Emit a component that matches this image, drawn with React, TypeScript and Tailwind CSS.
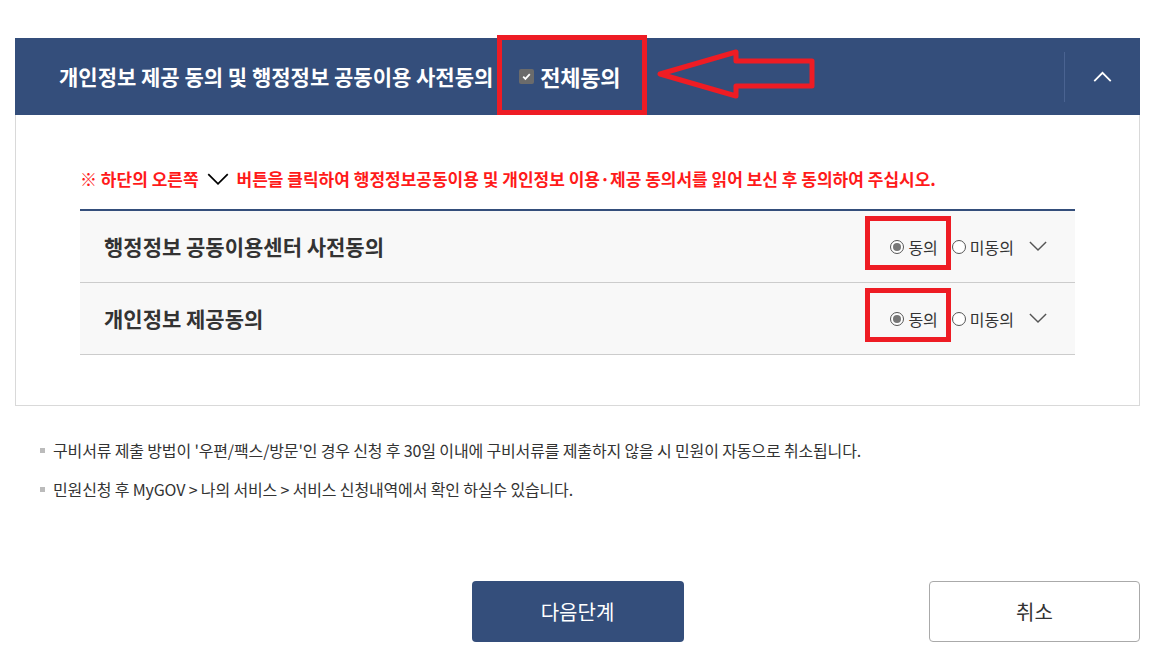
import { useState } from 'react'

const FONT = "font-['Noto_Sans_CJK_KR','Noto_Sans',sans-serif]"

function ChevronDown({ className }: { className?: string }) {
  return (
    <svg viewBox="0 0 20 12" className={className} fill="none">
      <path d="M1 1l9 9 9-9" stroke="currentColor" strokeWidth="1.6" />
    </svg>
  )
}

function Radio({ checked }: { checked: boolean }) {
  return (
    <span className="flex size-[14px] shrink-0 items-center justify-center rounded-full border border-[#555] bg-white">
      {checked && <span className="size-[8px] rounded-full bg-[#777]" />}
    </span>
  )
}

function AgreeRow({ title }: { title: string }) {
  const [agree, setAgree] = useState(true)

  return (
    <div className="relative flex h-[72px] items-center justify-between border-b border-[#cccccc] bg-[#f8f8f8] pl-[24px] pr-[28px]">
      <h3 className="text-[21px] font-bold text-[#333]">{title}</h3>

      <div className="flex items-center">
        <label className="flex cursor-pointer items-center gap-[4px] text-[16px] text-[#333]" onClick={() => setAgree(true)}>
          <Radio checked={agree} />
          동의
        </label>
        <label className="ml-[14px] flex cursor-pointer items-center gap-[4px] text-[16px] text-[#333]" onClick={() => setAgree(false)}>
          <Radio checked={!agree} />
          미동의
        </label>
        <ChevronDown className="ml-[15px] h-[11px] w-[18px] text-[#555]" />
      </div>

      {/* annotation box */}
      <div className="pointer-events-none absolute right-[124px] top-[5px] h-[54px] w-[86px] border-[5px] border-[#ee1c24]" />
    </div>
  )
}

export default function App() {
  return (
    <div className={`${FONT} min-h-[660px] bg-white px-[15px] pr-[18px] pt-[38px]`}>
      <section className="border border-t-0 border-[#d9d9d9]">
        <header className="relative -mx-px flex h-[77px] items-center bg-[#344e7b] pl-[44px]">
          <h2 className="text-[21px] font-bold text-white">
            개인정보 제공 동의 및 행정정보 공동이용 사전동의
          </h2>

          <label className="ml-[26px] flex items-center gap-[6px] text-[22px] font-bold tracking-[-0.3px] text-white">
            <span className="flex h-[15px] w-[15px] shrink-0 items-center justify-center rounded-[2px] bg-[#6b6b6b]">
              <svg viewBox="0 0 10 10" className="h-[11px] w-[11px]" fill="none">
                <path d="M2 5.2l2 2 4-4.4" stroke="white" strokeWidth="1.6" />
              </svg>
            </span>
            전체동의
          </label>

          {/* annotation: red frame + arrow */}
          <div className="pointer-events-none absolute left-[482px] top-[-3px] h-[80px] w-[150px] border-[5px] border-[#ee1c24]" />
          <svg className="pointer-events-none absolute left-[640px] top-[10px]" width="180" height="56" viewBox="0 0 180 56" fill="none">
            <path
              d="M5 26 L81 4 L81 13 L157 13 L157 38 L81 38 L81 48 Z"
              stroke="#ee1c24"
              strokeWidth="5"
              strokeLinejoin="round"
            />
          </svg>

          <div className="ml-auto flex h-full items-center">
            <span className="h-[50px] w-px bg-[#4a6391]" />
            <button type="button" className="flex h-full w-[75px] items-center justify-center">
              <svg viewBox="0 0 20 12" className="h-[11px] w-[19px]" fill="none">
                <path d="M1 11l9-9 9 9" stroke="white" strokeWidth="2" />
              </svg>
            </button>
          </div>
        </header>

        <div className="px-[64px] pb-[50px] pt-[52px]">
          <p className="flex items-center text-[17px] font-bold leading-[24px] text-[#ff1a1a]">
            ※ 하단의 오른쪽
            <ChevronDown className="mx-[8px] h-[13px] w-[22px] text-black" />
            버튼을 클릭하여 행정정보공동이용 및 개인정보 이용·제공 동의서를 읽어 보신 후 동의하여 주십시오.
          </p>

          <div className="mt-[18px] border-t-2 border-[#344e7b]">
            <AgreeRow title="행정정보 공동이용센터 사전동의" />
            <AgreeRow title="개인정보 제공동의" />
          </div>
        </div>
      </section>

      <ul className="mt-[32px] flex flex-col gap-[15px] pl-[25px] text-[16px] leading-[24px] tracking-[-0.15px] text-[#333]">
        <li className="flex items-center gap-[8px]">
          <span className="size-[5px] shrink-0 bg-[#bbb]" />
          구비서류 제출 방법이 '우편/팩스/방문'인 경우 신청 후 30일 이내에 구비서류를 제출하지 않을 시 민원이 자동으로 취소됩니다.
        </li>
        <li className="flex items-center gap-[8px]">
          <span className="size-[5px] shrink-0 bg-[#bbb]" />
          민원신청 후 MyGOV &gt; 나의 서비스 &gt; 서비스 신청내역에서 확인 하실수 있습니다.
        </li>
      </ul>

      <div className="mt-[80px] grid grid-cols-[1fr_auto_1fr] items-center">
        <span />
        <button type="button" className="h-[61px] w-[212px] rounded-[4px] bg-[#344e7b] text-[20px] text-white">
          다음단계
        </button>
        <button type="button" className="h-[61px] w-[211px] justify-self-end rounded-[4px] border border-[#aaa] bg-white text-[20px] text-[#333]">
          취소
        </button>
      </div>
    </div>
  )
}
